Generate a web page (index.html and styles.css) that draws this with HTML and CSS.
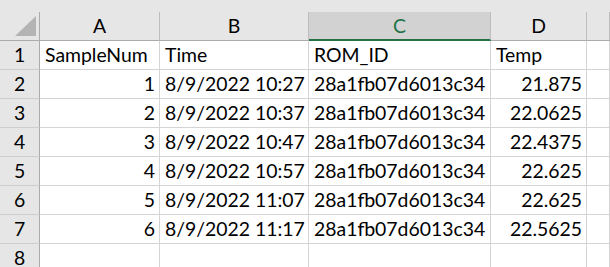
FILE: index.html
```html
<!DOCTYPE html>
<html lang="en">
<head>
    <meta charset="UTF-8">
    <title>Sheet1</title>
    <link rel="stylesheet" href="styles.css">
</head>
<body>
    <div class="sheet">
        <div class="corner"><span class="corner-mark"></span></div>
        <div class="col-head">A</div>
        <div class="col-head">B</div>
        <div class="col-head selected">C</div>
        <div class="col-head">D</div>
        <div class="col-head"></div>

        <div class="row-head">1</div>
        <div class="cell">SampleNum</div>
        <div class="cell">Time</div>
        <div class="cell">ROM_ID</div>
        <div class="cell">Temp</div>
        <div class="cell"></div>

        <div class="row-head">2</div>
        <div class="cell num">1</div>
        <div class="cell">8/9/2022 10:27</div>
        <div class="cell">28a1fb07d6013c34</div>
        <div class="cell num">21.875</div>
        <div class="cell"></div>

        <div class="row-head">3</div>
        <div class="cell num">2</div>
        <div class="cell">8/9/2022 10:37</div>
        <div class="cell">28a1fb07d6013c34</div>
        <div class="cell num">22.0625</div>
        <div class="cell"></div>

        <div class="row-head">4</div>
        <div class="cell num">3</div>
        <div class="cell">8/9/2022 10:47</div>
        <div class="cell">28a1fb07d6013c34</div>
        <div class="cell num">22.4375</div>
        <div class="cell"></div>

        <div class="row-head">5</div>
        <div class="cell num">4</div>
        <div class="cell">8/9/2022 10:57</div>
        <div class="cell">28a1fb07d6013c34</div>
        <div class="cell num">22.625</div>
        <div class="cell"></div>

        <div class="row-head">6</div>
        <div class="cell num">5</div>
        <div class="cell">8/9/2022 11:07</div>
        <div class="cell">28a1fb07d6013c34</div>
        <div class="cell num">22.625</div>
        <div class="cell"></div>

        <div class="row-head">7</div>
        <div class="cell num">6</div>
        <div class="cell">8/9/2022 11:17</div>
        <div class="cell">28a1fb07d6013c34</div>
        <div class="cell num">22.5625</div>
        <div class="cell"></div>

        <div class="row-head">8</div>
        <div class="cell"></div>
        <div class="cell"></div>
        <div class="cell"></div>
        <div class="cell"></div>
        <div class="cell"></div>
    </div>
</body>
</html>
```

FILE: styles.css
```css
body { margin: 0; padding-top: 12px; background: #e6e6e6; font-family: Lato, "Open Sans", sans-serif; font-size: 19.4px; color: #000; overflow: hidden; }
.sheet { display: grid; grid-template-columns: 40px 120px 149px 182px 96px 1fr; grid-auto-rows: 29px; }
.sheet > div { box-sizing: border-box; line-height: 28px; white-space: nowrap; overflow: hidden; }

.corner { position: relative; border-right: 1px solid #ababab; border-bottom: 1px solid #ababab; }
.corner-mark { position: absolute; right: 3px; bottom: 4px; width: 0; height: 0; border-left: 21px solid transparent; border-bottom: 20px solid #b4b4b4; }

.col-head { text-align: center; border-right: 1px solid #bdbdbd; border-bottom: 1px solid #ababab; }
.col-head.selected { background: #d2d2d2; color: #217346; border-bottom: 2px solid #217346; }

.row-head { text-align: center; border-right: 1px solid #ababab; border-bottom: 1px solid #cdcdcd; }

.cell { background: #fff; padding: 0 4px 0 5px; border-right: 1px solid #d4d4d4; border-bottom: 1px solid #d4d4d4; }
.cell.num { text-align: right; padding: 0 4px 0 5px; }
```
